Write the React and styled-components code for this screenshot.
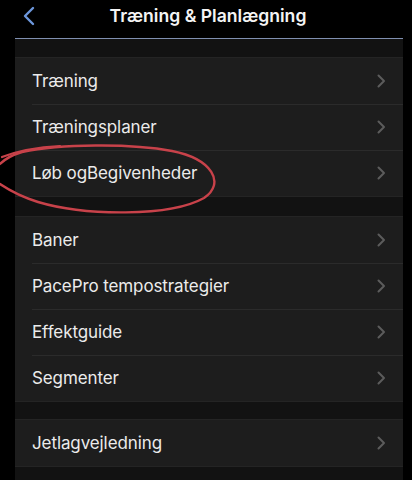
import React from 'react';
import styled, {createGlobalStyle} from 'styled-components';

const Global = createGlobalStyle`
  body {
    margin: 0;
    background: #000;
    font-family: Inter, "Noto Sans", "Liberation Sans", sans-serif;
    -webkit-font-smoothing: antialiased;
  }
`;

const Screen = styled.div`
  position: relative;
  width: 412px;
  height: 480px;
  overflow: hidden;
  background: #000;
  display: flex;
  flex-direction: column;
  align-items: flex-start;
`;

const Panel = styled.div`
  width: 388px;
  margin-left: 15px;
  flex: 1;
  background: #121212;
  display: flex;
  flex-direction: column;
`;

const Header = styled.div`
  height: 38px;
  background: #000;
  border-bottom: 1.5px solid #7f8fb0;
  position: relative;
  display: flex;
  align-items: center;
  justify-content: center;
`;

const Title = styled.div`
  color: #f4f4f4;
  font-size: 17.6px;
  font-weight: 600;
  letter-spacing: 0;
  margin-top: -7px;
  margin-left: -2px;
`;

const Back = styled.div`
  position: absolute;
  left: 7px;
  top: 6px;
`;

const Group = styled.div`
  margin-top: ${p => p.$gap}px;
  background: #1d1d1d;
  border-top: 1px solid #242424;
`;

const Row = styled.div`
  height: 46px;
  display: flex;
  align-items: center;
  padding-left: 17px;
`;

const RowInner = styled.div`
  flex: 1;
  height: 100%;
  display: flex;
  align-items: center;
  justify-content: space-between;
  padding-right: 17px;
  border-bottom: 1px solid ${p => (p.$last ? '#242424' : '#2b2b2b')};
  margin-left: ${p => (p.$last ? '-17px' : '0')};
  padding-left: ${p => (p.$last ? '17px' : '0')};
`;

const Label = styled.span`
  color: #ebebeb;
  font-size: 17px;
  letter-spacing: -0.1px;
  margin-top: 1px;
`;

const Scribble = styled.svg`
  position: absolute;
  left: 0;
  top: 0;
  pointer-events: none;
`;

const Chevron = () => (
  <svg width="9" height="14" viewBox="0 0 9 14">
    <path d="M1.5 1.5 L7 7 L1.5 12.5" fill="none" stroke="#5c5c5c" strokeWidth="2" strokeLinecap="round" strokeLinejoin="round"/>
  </svg>
);

const groups = [
  {gap: 18, items: ['Træning', 'Træningsplaner', 'Løb ogBegivenheder']},
  {gap: 20, items: ['Baner', 'PacePro tempostrategier', 'Effektguide', 'Segmenter']},
  {gap: 18, items: ['Jetlagvejledning']},
];

export default function App() {
  return (
    <Screen>
      <Global/>
      <Panel>
        <Header>
          <Back>
            <svg width="14" height="20" viewBox="0 0 14 20">
              <path d="M11 2 L3 10 L11 18" fill="none" stroke="#6d97dc" strokeWidth="2.4" strokeLinecap="round" strokeLinejoin="round"/>
            </svg>
          </Back>
          <Title>Træning &amp; Planlægning</Title>
        </Header>
        {groups.map((g, gi) => (
          <Group key={gi} $gap={g.gap}>
            {g.items.map((item, i) => (
              <Row key={item}>
                <RowInner $last={i === g.items.length - 1}>
                  <Label>{item}</Label>
                  <Chevron/>
                </RowInner>
              </Row>
            ))}
          </Group>
        ))}
      </Panel>
      <Scribble width="412" height="480" viewBox="0 0 412 480">
        <path
          d="M0 164 C6 158 12 155 22 152 C60 144 130 143 172 151 C212 159 226 183 204 198 C170 217 85 216 38 202 C22 197 9 190 0 184"
          fill="none" stroke="#c8424a" strokeWidth="2.4" strokeLinecap="round"/>
        <path d="M2 157 C20 150 40 147 60 146" fill="none" stroke="#c8424a" strokeWidth="2.2" strokeLinecap="round"/>
      </Scribble>
    </Screen>
  );
}
